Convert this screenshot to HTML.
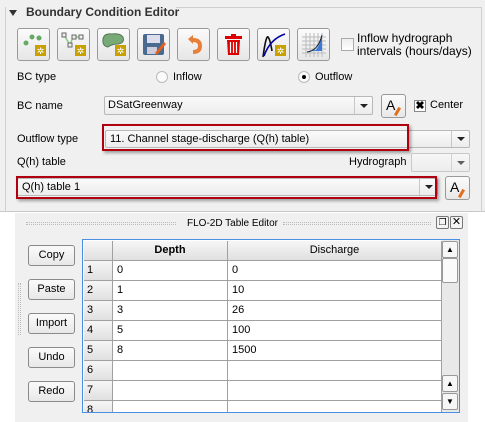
<!DOCTYPE html>
<html><head><style>
*{margin:0;padding:0;box-sizing:border-box}
body{width:485px;height:422px;background:#fff;position:relative;overflow:hidden;font-family:"Liberation Sans",sans-serif;font-size:11px;color:#000}
.a{position:absolute}
.t{position:absolute;white-space:nowrap;line-height:13px}
.btn{position:absolute;width:33px;height:33px;border:1px solid #9a9a9a;border-radius:3px;background:linear-gradient(#fbfbfb,#e6e6e6)}
.combo{position:absolute;border:1px solid #b8b8b8;border-radius:2px;background:linear-gradient(#fafafa,#ececec)}
.arrow{position:absolute;right:0;top:0;bottom:0;width:18px;border-left:1px solid #c8c8c8}
.arrow:after{content:"";position:absolute;left:5px;top:50%;margin-top:-2px;border-left:4px solid transparent;border-right:4px solid transparent;border-top:4px solid #222}
.red{position:absolute;border:2px solid #b00010;box-shadow:2px 2px 3px rgba(0,0,0,.35)}
.pb{position:absolute;width:47px;height:21px;border:1px solid #8a8a8a;border-radius:3px;background:linear-gradient(#fafafa,#e8e8e8);text-align:center;line-height:19px;font-size:11px}
.cell{position:absolute;height:20px;border-right:1px solid #a0a0a0;border-bottom:1px solid #a0a0a0;padding-left:4px;line-height:19px;background:#fff}
.rh{position:absolute;height:20px;width:29px;border-right:1px solid #a0a0a0;border-bottom:1px solid #a0a0a0;background:linear-gradient(#f6f6f6,#e0e0e0);padding-left:3px;line-height:19px}
</style></head><body>
<div class="a" style="left:0;top:0;width:485px;height:212px;background:#f0f0f0;border-bottom:1px solid #c8c8c8"></div>
<div class="a" style="left:5px;top:7px;width:477px;height:205px;border:1px solid #d0d0d0;border-bottom:none"></div>
<div class="a" style="left:6px;top:0;width:170px;height:20px;background:#f0f0f0"></div>
<div class="a" style="left:9px;top:10px;border-left:4px solid transparent;border-right:4px solid transparent;border-top:6px solid #333"></div>
<div class="t" style="left:26px;top:6px;font-weight:bold;font-size:12px;color:#333">Boundary Condition Editor</div>

<div class="btn" style="left:17px;top:28px"><svg width="31" height="31"><circle cx="8" cy="14" r="2.5" fill="#6a6"/><circle cx="14" cy="8" r="2.5" fill="#6a6"/><circle cx="21" cy="9" r="2.5" fill="#6a6"/><rect x="17" y="16" width="11" height="11" fill="#c8a000"/><text x="22.5" y="25" font-size="9" fill="#fff" text-anchor="middle">✲</text></svg></div>
<div class="btn" style="left:57px;top:28px"><svg width="31" height="31"><path d="M6 6 L12 16 L15 8 L23 8" stroke="#8c8" stroke-width="1.5" fill="none"/><rect x="4" y="4" width="4" height="4" fill="#eee" stroke="#666"/><rect x="10" y="14" width="4" height="4" fill="#eee" stroke="#666"/><rect x="14" y="6" width="4" height="4" fill="#eee" stroke="#666"/><rect x="21" y="6" width="4" height="4" fill="#eee" stroke="#666"/><rect x="17" y="16" width="11" height="11" fill="#c8a000"/><text x="22.5" y="25" font-size="9" fill="#fff" text-anchor="middle">✲</text></svg></div>
<div class="btn" style="left:97px;top:28px"><svg width="31" height="31"><path d="M5 10 Q6 4 14 5 Q22 4 25 8 Q27 14 20 15 Q14 15 10 18 Q4 17 5 10Z" fill="#7a7" stroke="#575"/><rect x="17" y="16" width="11" height="11" fill="#c8a000"/><text x="22.5" y="25" font-size="9" fill="#fff" text-anchor="middle">✲</text></svg></div>
<div class="btn" style="left:137px;top:28px"><svg width="31" height="31"><rect x="5" y="5" width="21" height="21" rx="2" fill="#4a6a90"/><rect x="9" y="6" width="13" height="8" fill="#dde"/><rect x="9" y="18" width="10" height="7" fill="#ccd"/><path d="M17 24 L26 13 L28 15 L19 26 Z" fill="#e06020"/></svg></div>
<div class="btn" style="left:177px;top:28px"><svg width="31" height="31"><path d="M10 10 L15 6 L15 9 Q24 9 24 17 Q24 25 15 25 L15 21 Q20 21 20 17 Q20 13 15 13 L15 15 Z" fill="#e8803a"/></svg></div>
<div class="btn" style="left:217px;top:28px"><svg width="31" height="31"><rect x="7" y="7" width="17" height="3" fill="#d00"/><rect x="13" y="5" width="5" height="2" fill="#d00"/><path d="M9 11 L22 11 L21 26 L10 26Z" fill="#d00"/><path d="M12.5 13v11M15.5 13v11M18.5 13v11" stroke="#fff" stroke-width="1.2"/></svg></div>
<div class="btn" style="left:257px;top:28px"><svg width="31" height="31"><path d="M5 28 Q8 6 10 8 Q12 10 14 22" stroke="#111" stroke-width="1.6" fill="none"/><path d="M6 27 Q12 10 27 5" stroke="#00a" stroke-width="1.6" fill="none"/><rect x="17" y="16" width="11" height="11" fill="#c8a000"/><text x="22.5" y="25" font-size="9" fill="#fff" text-anchor="middle">✲</text></svg></div>
<div class="btn" style="left:297px;top:28px"><svg width="31" height="31"><path d="M4 8H28M4 12H28M4 16H28M4 20H28M4 24H28M8 4V28M12 4V28M16 4V28M20 4V28M24 4V28" stroke="#bbb" stroke-width="1"/><path d="M11 22 L18 21 L21 16 L24 7 L24 22 Z" fill="#3a7ade"/><path d="M9 23 Q20 22 24 6" stroke="#123" fill="none"/></svg></div>

<div class="a" style="left:341px;top:38px;width:13px;height:13px;border:1px solid #aaa;background:linear-gradient(#eee,#fff)"></div>
<div class="t" style="left:357px;top:32px;font-size:12px">Inflow hydrograph</div>
<div class="t" style="left:357px;top:45px;font-size:12px">intervals (hours/days)</div>

<div class="t" style="left:17px;top:71px">BC type</div>
<div class="a" style="left:156px;top:71px;width:12px;height:12px;border-radius:50%;border:1px solid #bbb;background:#fafafa"></div>
<div class="t" style="left:173px;top:71px">Inflow</div>
<div class="a" style="left:298px;top:71px;width:12px;height:12px;border-radius:50%;border:1px solid #bbb;background:#fafafa"></div>
<div class="a" style="left:302px;top:75px;width:4px;height:4px;border-radius:50%;background:#000"></div>
<div class="t" style="left:315px;top:71px">Outflow</div>

<div class="t" style="left:17px;top:100px">BC name</div>
<div class="combo" style="left:104px;top:96px;width:269px;height:19px"><span class="t" style="left:3px;top:2px">DSatGreenway</span><div class="arrow"></div></div>
<div class="a" style="left:381px;top:94px;width:25px;height:24px;border:1px solid #999;border-radius:3px;background:linear-gradient(#fbfbfb,#e8e8e8)"><span class="t" style="left:4px;top:4px;font-size:14px">A</span><div class="a" style="left:14px;top:12px;width:3px;height:9px;background:#e07020;transform:rotate(30deg)"></div></div>
<div class="a" style="left:414px;top:100px;width:12px;height:12px;border:1px solid #888;background:#fff;font-size:11px;line-height:10px;text-align:center;font-weight:bold">✖</div>
<div class="t" style="left:430px;top:99px">Center</div>

<div class="t" style="left:17px;top:133px">Outflow type</div>
<div class="combo" style="left:105px;top:130px;width:365px;height:18px"><span class="t" style="left:4px;top:2px">11. Channel stage-discharge (Q(h) table)</span><div class="arrow"></div></div>
<div class="red" style="left:102px;top:124px;width:307px;height:27px"></div>

<div class="t" style="left:17px;top:156px">Q(h) table</div>
<div class="t" style="left:349px;top:156px">Hydrograph</div>
<div class="combo" style="left:411px;top:153px;width:59px;height:19px;opacity:.7"><div class="arrow"></div></div>

<div class="combo" style="left:17px;top:178px;width:421px;height:18px"><span class="t" style="left:4px;top:2px">Q(h) table 1</span><div class="arrow"></div></div>
<div class="red" style="left:16px;top:176px;width:421px;height:23px"></div>
<div class="a" style="left:445px;top:176px;width:25px;height:24px;border:1px solid #999;border-radius:3px;background:linear-gradient(#fbfbfb,#e8e8e8)"><span class="t" style="left:4px;top:4px;font-size:14px">A</span><div class="a" style="left:14px;top:12px;width:3px;height:9px;background:#e07020;transform:rotate(30deg)"></div></div>

<!-- lower -->
<div class="a" style="left:15px;top:213px;width:453px;height:209px;background:#f0f0f0"></div>
<div class="a" style="left:26px;top:222px;width:150px;height:3px;border-top:1px dotted #bbb;border-bottom:1px dotted #bbb"></div>
<div class="a" style="left:283px;top:222px;width:148px;height:3px;border-top:1px dotted #bbb;border-bottom:1px dotted #bbb"></div>
<div class="a" style="left:18px;top:283px;width:3px;height:52px;border-left:1px dotted #bbb;border-right:1px dotted #bbb"></div>
<div class="t" style="left:187px;top:217px;font-size:10px">FLO-2D Table Editor</div>
<div class="a" style="left:436px;top:216px;width:13px;height:13px;border:1px solid #777;border-radius:2px;background:#f4f4f4;font-size:9px;line-height:11px;text-align:center">❐</div>
<div class="a" style="left:450px;top:216px;width:13px;height:13px;border:1px solid #777;border-radius:2px;background:#f4f4f4;font-size:11px;line-height:11px;text-align:center">✕</div>

<div class="pb" style="left:28px;top:245px">Copy</div>
<div class="pb" style="left:28px;top:279px">Paste</div>
<div class="pb" style="left:28px;top:313px">Import</div>
<div class="pb" style="left:28px;top:347px">Undo</div>
<div class="pb" style="left:28px;top:381px">Redo</div>

<div class="a" style="left:82px;top:239px;width:378px;height:174px;border:1px solid #4a90e0;background:#fff;overflow:hidden">
 <div class="a" style="left:1px;top:1px;width:29px;height:20px;border-right:1px solid #a0a0a0;border-bottom:1px solid #a0a0a0;background:linear-gradient(#f6f6f6,#e0e0e0)"></div>
 <div class="a" style="left:30px;top:1px;width:115px;height:20px;border-right:1px solid #a0a0a0;border-bottom:1px solid #a0a0a0;background:linear-gradient(#f6f6f6,#e0e0e0);text-align:center;line-height:19px;font-weight:bold">Depth</div>
 <div class="a" style="left:145px;top:1px;width:214px;height:20px;border-right:1px solid #a0a0a0;border-bottom:1px solid #a0a0a0;background:linear-gradient(#f6f6f6,#e0e0e0);text-align:center;line-height:19px">Discharge</div>
 <div class="rh" style="left:1px;top:21px">1</div><div class="cell" style="left:30px;top:21px;width:115px">0</div><div class="cell" style="left:145px;top:21px;width:214px">0</div>
 <div class="rh" style="left:1px;top:41px">2</div><div class="cell" style="left:30px;top:41px;width:115px">1</div><div class="cell" style="left:145px;top:41px;width:214px">10</div>
 <div class="rh" style="left:1px;top:61px">3</div><div class="cell" style="left:30px;top:61px;width:115px">3</div><div class="cell" style="left:145px;top:61px;width:214px">26</div>
 <div class="rh" style="left:1px;top:81px">4</div><div class="cell" style="left:30px;top:81px;width:115px">5</div><div class="cell" style="left:145px;top:81px;width:214px">100</div>
 <div class="rh" style="left:1px;top:101px">5</div><div class="cell" style="left:30px;top:101px;width:115px">8</div><div class="cell" style="left:145px;top:101px;width:214px">1500</div>
 <div class="rh" style="left:1px;top:121px">6</div><div class="cell" style="left:30px;top:121px;width:115px"></div><div class="cell" style="left:145px;top:121px;width:214px"></div>
 <div class="rh" style="left:1px;top:141px">7</div><div class="cell" style="left:30px;top:141px;width:115px"></div><div class="cell" style="left:145px;top:141px;width:214px"></div>
 <div class="rh" style="left:1px;top:161px">8</div><div class="cell" style="left:30px;top:161px;width:115px"></div><div class="cell" style="left:145px;top:161px;width:214px"></div>
 <div class="a" style="left:359px;top:0;width:17px;height:172px;background:#e8e8e8"></div>
 <div class="a" style="left:359px;top:1px;width:16px;height:17px;border:1px solid #999;border-radius:2px;background:#f6f6f6;font-size:8px;text-align:center;line-height:15px">▲</div>
 <div class="a" style="left:359px;top:18px;width:16px;height:25px;border:1px solid #999;border-radius:2px;background:#fafafa"></div>
 <div class="a" style="left:359px;top:135px;width:16px;height:17px;border:1px solid #999;border-radius:2px;background:#f6f6f6;font-size:8px;text-align:center;line-height:15px">▲</div>
 <div class="a" style="left:359px;top:153px;width:16px;height:17px;border:1px solid #999;border-radius:2px;background:#f6f6f6;font-size:8px;text-align:center;line-height:15px">▼</div>
</div>
</body></html>
